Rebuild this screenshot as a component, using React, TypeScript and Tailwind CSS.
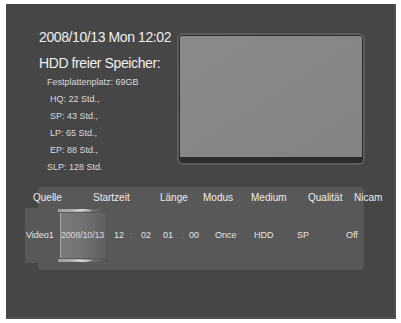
import React from "react";

const font = { fontFamily: '"Liberation Sans", Arial, sans-serif' };

const storage = [
  { text: "Festplattenplatz: 69GB", indent: "pl-[8px]" },
  { text: "HQ: 22 Std.,", indent: "pl-[11px]" },
  { text: "SP: 43 Std.,", indent: "pl-[11px]" },
  { text: "LP: 65 Std.,", indent: "pl-[11px]" },
  { text: "EP: 88 Std.,", indent: "pl-[11px]" },
  { text: "SLP: 128 Std.", indent: "pl-[8px]" },
];

const headers = [
  { label: "Quelle", w: "w-[60px]" },
  { label: "Startzeit", w: "w-[67px]" },
  { label: "Länge", w: "w-[43px]" },
  { label: "Modus", w: "w-[48px]" },
  { label: "Medium", w: "w-[57px]" },
  { label: "Qualität", w: "w-[46px]" },
  { label: "Nicam", w: "w-[40px]" },
];

function SpinBar({ down }: { down?: boolean }) {
  const id = down ? "barDown" : "barUp";
  return (
    <svg width="50" height="5" viewBox="0 0 50 5" className="block">
      <defs>
        <linearGradient id={id} x1="0" x2="1" y1="0" y2="0">
          <stop offset="0" stopColor="#9c9c9c" />
          <stop offset="0.45" stopColor="#b8b8b8" />
          <stop offset="0.7" stopColor="#6e6e6e" />
          <stop offset="1" stopColor="#4c4c4c" />
        </linearGradient>
      </defs>
      <rect x="0" y="1" width="50" height="3" fill={`url(#${id})`} />
      {down ? (
        <path d="M16 2 Q25 5.5 34 2 Q25 3.5 16 2 Z" fill="#f4f4f4" />
      ) : (
        <path d="M16 3 Q25 -0.5 34 3 Q25 1.5 16 3 Z" fill="#f4f4f4" />
      )}
    </svg>
  );
}

function DateSpinner() {
  return (
    <div className="flex flex-col w-[50px] h-full shrink-0">
      <SpinBar />
      <div className="flex-1 mx-[2px] flex items-center bg-gradient-to-r from-[#7a7a7a] via-[#727272] to-[#5e5e5e] border-l border-[#a8a8a8]">
        <span className="text-[9px] leading-[11px] tracking-[-0.2px] text-[#d6d6d6] whitespace-nowrap">2008/10/13</span>
      </div>
      <SpinBar down />
    </div>
  );
}

function Cell({ w, children, dim }: { w: string; children: React.ReactNode; dim?: boolean }) {
  return (
    <span className={`${w} shrink-0 whitespace-nowrap text-[9px] leading-[11px] ${dim ? "text-[#7c7c7c]" : "text-[#e4e4e4]"}`}>
      {children}
    </span>
  );
}

export default function App() {
  return (
    <div className="w-[401px] h-[323px] bg-white overflow-hidden pt-[4px] pl-[6px]" style={font}>
      <div className="w-[390px] h-[315px] bg-[#464646] border-r-2 border-b-2 border-[#505050] flex flex-col">
        {/* top: clock, storage info, preview */}
        <div className="flex">
          <div className="w-[171px] shrink-0 pl-[33px] pt-[25px] text-[#f0f0f0]">
            <div className="text-[14px] leading-[16px] tracking-[-0.4px] whitespace-nowrap">2008/10/13 Mon 12:02</div>
            <div className="mt-[10px] text-[14px] leading-[16px] tracking-[-0.4px] whitespace-nowrap">HDD freier Speicher:</div>
            <div className="mt-[3px] text-[9px] leading-[17px] text-[#dadada]">
              {storage.map((s) => (
                <div key={s.text} className={`${s.indent} whitespace-nowrap`}>
                  {s.text}
                </div>
              ))}
            </div>
          </div>
          <div className="mt-[29px] w-[188px] h-[132px] shrink-0 rounded-[6px] bg-[#5c5c5c] p-[2px]">
            <div className="w-full h-full rounded-[4px] bg-[#2c2c2c] p-[1px] pb-[6px]">
              <div className="w-full h-full rounded-t-[2px] bg-gradient-to-br from-[#8a8a8a] to-[#838383]" />
            </div>
          </div>
        </div>

        {/* timer panel */}
        <div className="mt-[11px] ml-[32px] w-[326px] rounded-[4px] bg-[#585858] pt-[5px] pb-[7px]">
          <div className="-ml-[5px] flex text-[10px] leading-[12px] text-[#ececec]">
            {headers.map((h) => (
              <span key={h.label} className={`${h.w} shrink-0 whitespace-nowrap`}>
                {h.label}
              </span>
            ))}
          </div>
          <div className="mt-[4px] -ml-[13px] w-[339px] h-[55px] bg-[#585858] flex items-center pl-[1px]">
            <Cell w="w-[32px]">Video1</Cell>
            <DateSpinner />
            <span className="w-[6px] shrink-0" />
            <Cell w="w-[16px]">12</Cell>
            <Cell w="w-[11px]" dim>:</Cell>
            <Cell w="w-[22px]">02</Cell>
            <Cell w="w-[18px]">01</Cell>
            <Cell w="w-[8px]" dim>:</Cell>
            <Cell w="w-[26px]">00</Cell>
            <Cell w="w-[39px]">Once</Cell>
            <Cell w="w-[43px]">HDD</Cell>
            <Cell w="w-[49px]">SP</Cell>
            <Cell w="w-[20px]">Off</Cell>
          </div>
        </div>
      </div>
    </div>
  );
}
